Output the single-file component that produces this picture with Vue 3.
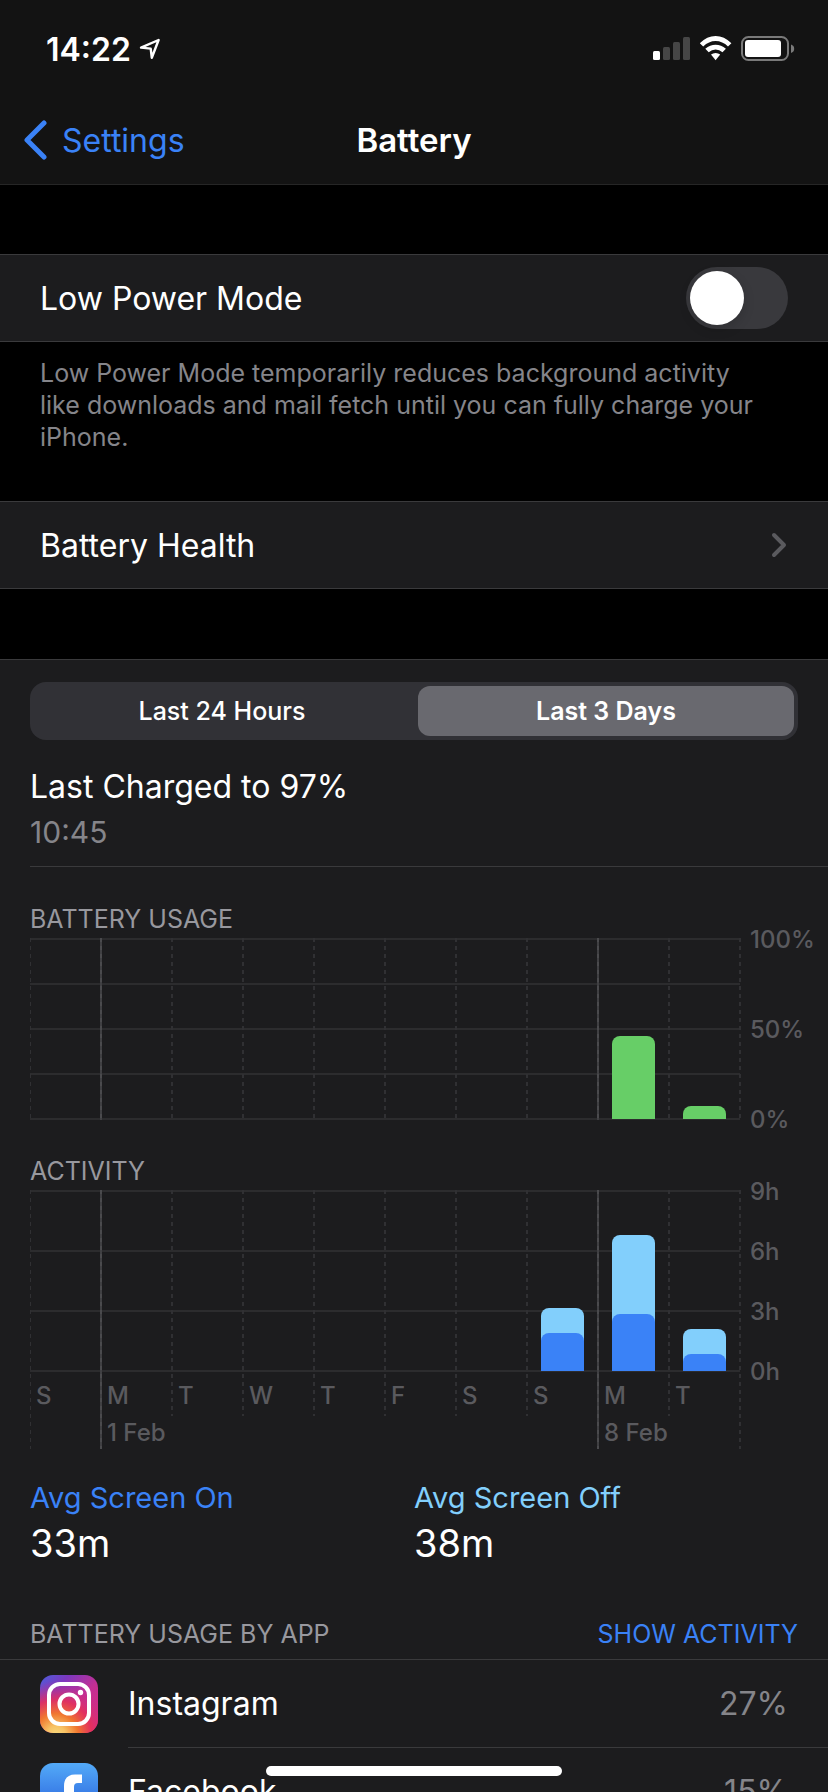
<script setup>
import { ref } from 'vue'

const lowPower = ref(false)
const range = ref('3d')

const days = [
  { day: 'S', usage: 0, on: 0, total: 0 },
  { day: 'M', date: '1 Feb', usage: 0, on: 0, total: 0 },
  { day: 'T', usage: 0, on: 0, total: 0 },
  { day: 'W', usage: 0, on: 0, total: 0 },
  { day: 'T', usage: 0, on: 0, total: 0 },
  { day: 'F', usage: 0, on: 0, total: 0 },
  { day: 'S', usage: 0, on: 0, total: 0 },
  { day: 'S', usage: 0, on: 1.9, total: 3.15 },
  { day: 'M', date: '8 Feb', usage: 46, on: 2.85, total: 6.75 },
  { day: 'T', usage: 7, on: 0.85, total: 2.1 },
]

const maxHours = 9
const share = (value, max) => ({ height: `${(value / max) * 100}%` })
</script>

<template>
  <div class="screen">
    <header class="top">
      <div class="status">
        <span class="time">14:22</span>
        <svg class="locate" width="22" height="22" viewBox="0 0 22 22">
          <path d="M2 9.600 L19.600 2 L12.800 19.800 L11.700 10.600 Z" fill="none" stroke="#fff" stroke-width="2.400" stroke-linejoin="round" />
        </svg>
        <svg class="signals" width="142" height="26" viewBox="0 0 142 26">
          <rect x="0" y="15" width="7" height="9" rx="1.500" fill="#fff" />
          <rect x="10" y="11" width="7" height="13" rx="1.500" fill="#464646" />
          <rect x="20" y="6" width="7" height="18" rx="1.500" fill="#464646" />
          <rect x="30" y="1" width="7" height="23" rx="1.500" fill="#464646" />
          <g fill="#fff">
            <path d="M46.800 7.300 Q54 0 62.600 0 Q71.200 0 78.400 7.300 L75 10.600 Q69.500 5.100 62.600 5.100 Q55.700 5.100 50.200 10.600 Z" />
            <path d="M52.300 12.800 Q57 8.700 62.600 8.700 Q68.200 8.700 72.900 12.800 L69.500 16.200 Q66.400 13.500 62.600 13.500 Q58.800 13.500 55.700 16.200 Z" />
            <path d="M58 18.600 Q60 16.900 62.600 16.900 Q65.200 16.900 67.200 18.600 L62.600 24.200 Z" />
          </g>
          <rect x="89" y="1" width="46" height="23" rx="6.500" fill="none" stroke="#7a7a7a" stroke-width="2" />
          <rect x="92" y="4" width="36" height="17" rx="3" fill="#fff" />
          <path d="M138 8.500 Q141.200 9.500 141.200 12.700 Q141.200 15.900 138 17 Z" fill="#7a7a7a" />
        </svg>
      </div>
      <nav class="nav">
        <a class="back" href="#settings">
          <svg width="24" height="40" viewBox="0 0 24 40">
            <path d="M20 3 L3 20 L20 37" fill="none" stroke="#3a82f7" stroke-width="5" stroke-linecap="round" stroke-linejoin="round" />
          </svg>
          <span>Settings</span>
        </a>
        <h1>Battery</h1>
      </nav>
    </header>

    <main class="content">
      <label class="row" for="low-power">
        <span>Low Power Mode</span>
        <input id="low-power" v-model="lowPower" class="toggle" type="checkbox" role="switch" />
      </label>
      <p class="note">
        Low Power Mode temporarily reduces background activity like downloads and mail fetch until you can fully charge your iPhone.
      </p>

      <a class="row" href="#health">
        <span>Battery Health</span>
        <svg width="18" height="28" viewBox="0 0 18 28">
          <path d="M4 4 L14 14 L4 24" fill="none" stroke="#5a5a5e" stroke-width="4" stroke-linecap="round" stroke-linejoin="round" />
        </svg>
      </a>

      <section class="panel">
        <div class="segments">
          <button type="button" :class="{ active: range === '24h' }" @click="range = '24h'">Last 24 Hours</button>
          <button type="button" :class="{ active: range === '3d' }" @click="range = '3d'">Last 3 Days</button>
        </div>

        <div class="charged">
          <h2>Last Charged to 97%</h2>
          <p>10:45</p>
        </div>

        <h3 class="caption usage-title">BATTERY USAGE</h3>
        <div class="chart">
          <div class="plot quarters">
            <div v-for="(d, i) in days" :key="i" class="column" :class="{ week: d.date }">
              <div class="slot">
                <div v-if="d.usage" class="bar usage" :style="share(d.usage, 100)"></div>
              </div>
            </div>
          </div>
          <div class="axis"><span>100%</span><span>50%</span><span>0%</span></div>
        </div>

        <h3 class="caption activity-title">ACTIVITY</h3>
        <div class="chart">
          <div class="plot thirds">
            <div v-for="(d, i) in days" :key="i" class="column" :class="{ week: d.date }">
              <div class="slot">
                <div v-if="d.total" class="bar off" :style="share(d.total, maxHours)">
                  <div class="bar on" :style="share(d.on, d.total)"></div>
                </div>
              </div>
              <span class="day">{{ d.day }}</span>
              <span v-if="d.date" class="date">{{ d.date }}</span>
            </div>
          </div>
          <div class="axis"><span>9h</span><span>6h</span><span>3h</span><span>0h</span></div>
        </div>

        <dl class="averages">
          <div>
            <dt class="blue">Avg Screen On</dt>
            <dd>33m</dd>
          </div>
          <div>
            <dt class="sky">Avg Screen Off</dt>
            <dd>38m</dd>
          </div>
        </dl>

        <div class="list-head">
          <h3>BATTERY USAGE BY APP</h3>
          <button type="button">SHOW ACTIVITY</button>
        </div>

        <ul class="apps">
          <li>
            <svg class="icon" width="58" height="58" viewBox="0 0 58 58">
              <defs>
                <linearGradient id="ig-base" x1="0" y1="0" x2="1" y2="1">
                  <stop offset="0" stop-color="#4a5fdc" />
                  <stop offset="0.250" stop-color="#7c38bf" />
                  <stop offset="0.550" stop-color="#c32f94" />
                  <stop offset="1" stop-color="#e02a77" />
                </linearGradient>
                <radialGradient id="ig-glow" cx="0.280" cy="1.050" r="0.950">
                  <stop offset="0" stop-color="#f8dc80" />
                  <stop offset="0.180" stop-color="#f7c264" />
                  <stop offset="0.400" stop-color="#f0772f" />
                  <stop offset="0.650" stop-color="#e5315a" stop-opacity="0.900" />
                  <stop offset="1" stop-color="#c32f94" stop-opacity="0" />
                </radialGradient>
              </defs>
              <rect width="58" height="58" rx="13" fill="url(#ig-base)" />
              <rect width="58" height="58" rx="13" fill="url(#ig-glow)" />
              <rect x="9" y="9" width="40" height="40" rx="11" fill="none" stroke="#fff" stroke-width="4" />
              <circle cx="29" cy="29" r="9.500" fill="none" stroke="#fff" stroke-width="4" />
              <circle cx="40.500" cy="17.500" r="2.700" fill="#fff" />
            </svg>
            <div class="app">
              <span>Instagram</span>
              <span class="percent">27%</span>
            </div>
          </li>
          <li>
            <svg class="icon" width="58" height="58" viewBox="0 0 58 58">
              <defs>
                <linearGradient id="fb-base" x1="0" y1="0" x2="0" y2="1">
                  <stop offset="0" stop-color="#53aaf8" />
                  <stop offset="0.500" stop-color="#3b80e8" />
                  <stop offset="1" stop-color="#2b62d0" />
                </linearGradient>
              </defs>
              <rect width="58" height="58" rx="13" fill="url(#fb-base)" />
              <path d="M24 58 V38 H17 V29 H24 V23 C24 15.500 28 11.500 35 11.500 H42 V20 H38 C35 20 34 21.500 34 24 V29 H42 L40.500 38 H34 V58 Z" fill="#fff" />
            </svg>
            <div class="app">
              <span>Facebook</span>
              <span class="percent">15%</span>
            </div>
          </li>
        </ul>
      </section>
    </main>
    <div class="home"></div>
  </div>
</template>

<style>
body {
  background: #000;
}
</style>

<style scoped>
.screen {
  position: relative;
  display: flex;
  flex-direction: column;
  height: 100vh;
  overflow: hidden;
  background: #000;
  color: #fff;
  font-family: Inter, "Liberation Sans", sans-serif;
  font-size: 32px;
}
h1, h2, h3, p, dl, dd, ul {
  margin: 0;
  padding: 0;
  font-weight: 400;
}
a {
  color: inherit;
  text-decoration: none;
}
button {
  border: 0;
  padding: 0;
  background: none;
  color: inherit;
  font: inherit;
}
svg {
  display: block;
  flex: none;
}

.top {
  flex: none;
  background: #131313;
  border-bottom: 1px solid #262626;
}
.status {
  display: flex;
  align-items: center;
  height: 98px;
  padding: 0 33px 0 46px;
}
.time {
  font-size: 32px;
  font-weight: 600;
}
.locate {
  margin-left: 8px;
}
.signals {
  margin-left: auto;
}
.nav {
  display: grid;
  grid-template-columns: 1fr auto 1fr;
  align-items: center;
  height: 84px;
  padding: 0 24px 2px;
}
.nav h1 {
  font-size: 33px;
  font-weight: 600;
}
.back {
  display: flex;
  align-items: center;
  gap: 14px;
  color: #3a82f7;
}

.content {
  flex: 1;
  min-height: 0;
  overflow-y: auto;
  scrollbar-width: none;
  padding-top: 69px;
}
.row {
  display: flex;
  align-items: center;
  justify-content: space-between;
  box-sizing: border-box;
  height: 88px;
  padding: 0 40px;
  background: #1c1c1e;
  border: solid #3a3a3c;
  border-width: 1px 0;
}
.toggle {
  appearance: none;
  width: 102px;
  height: 62px;
  margin: 0;
  padding: 4px;
  box-sizing: border-box;
  border-radius: 31px;
  background: #39393d;
}
.toggle::before {
  content: "";
  display: block;
  width: 54px;
  height: 54px;
  border-radius: 50%;
  background: #fff;
  box-shadow: 0 4px 12px rgba(0, 0, 0, 0.15);
}
.toggle:checked {
  background: #67ce67;
}
.toggle:checked::before {
  margin-left: 40px;
}
.note {
  padding: 15px 58px 48px 40px;
  color: #85858a;
  font-size: 25px;
  line-height: 32px;
}

.panel {
  margin-top: 70px;
  padding-top: 22px;
  background: #1c1c1e;
  border-top: 1px solid #3a3a3c;
}
.segments {
  display: grid;
  grid-template-columns: 1fr 1fr;
  gap: 8px;
  box-sizing: border-box;
  height: 58px;
  margin: 0 30px;
  padding: 4px;
  border-radius: 16px;
  background: #313136;
  font-size: 25px;
  font-weight: 500;
}
.segments button {
  border-radius: 12px;
}
.segments .active {
  background: #69696f;
  font-weight: 600;
}
.charged {
  margin-left: 30px;
  padding: 24px 0 12px;
  border-bottom: 1px solid #3a3a3c;
}
.charged h2 {
  font-size: 32px;
  line-height: 46px;
}
.charged p {
  color: #85858a;
  font-size: 30px;
  line-height: 44px;
}
.caption {
  margin-left: 30px;
  color: #98989e;
  font-size: 25px;
  line-height: 38px;
}
.usage-title {
  margin-top: 33px;
}
.activity-title {
  margin-top: 32px;
}

.chart {
  display: flex;
  align-items: flex-start;
  padding-left: 30px;
  color: #5a5a5e;
  font-size: 24px;
  font-weight: 500;
}
.plot {
  flex: 1;
  display: grid;
  grid-template-columns: repeat(10, 1fr);
  align-items: start;
  background-size: 100% 182px;
  background-repeat: no-repeat;
}
.quarters {
  background-image: repeating-linear-gradient(#2c2c2e 0 2px, transparent 2px 45px);
}
.thirds {
  background-image: repeating-linear-gradient(#2c2c2e 0 2px, transparent 2px 60px);
}
.column {
  position: relative;
}
.column::before,
.column:last-child::after {
  content: "";
  position: absolute;
  top: 0;
  bottom: 0;
  left: -1px;
  width: 2px;
  background: repeating-linear-gradient(#303033 0 4px, transparent 4px 8px);
}
.column:first-child::before {
  left: 0;
  width: 1px;
}
.column:last-child::after {
  right: -1px;
  left: auto;
}
.column.week::before {
  background: repeating-linear-gradient(#4a4a4d 0 4px, #404043 4px 8px);
}
.thirds .column:first-child::before,
.thirds .column:last-child::after {
  bottom: -33px;
}
.slot {
  display: flex;
  align-items: flex-end;
  justify-content: center;
  height: 181px;
  margin-bottom: 1px;
}
.bar {
  border-radius: 8px 8px 0 0;
}
.slot > .bar {
  width: 60%;
}
.usage {
  background: #67ce67;
}
.off {
  display: flex;
  align-items: flex-end;
  background: #82cffc;
}
.on {
  width: 100%;
  background: #3a82f7;
}
.day,
.date {
  display: block;
  padding-left: 6px;
  white-space: nowrap;
}
.day {
  padding-top: 4px;
  line-height: 40px;
}
.date {
  line-height: 33px;
}
.axis {
  display: flex;
  flex-direction: column;
  justify-content: space-between;
  width: 78px;
  height: 210px;
  margin: -13px 0 -15px;
  padding-left: 10px;
  line-height: 30px;
}

.averages {
  display: grid;
  grid-template-columns: 1fr 1fr;
  margin: 29px 30px 40px;
}
.averages dt {
  font-size: 29px;
  line-height: 40px;
}
.averages dd {
  font-size: 38px;
  line-height: 50px;
}
.blue {
  color: #3a82f7;
}
.sky {
  color: #82cffc;
}
.list-head {
  display: flex;
  justify-content: space-between;
  height: 51px;
  padding: 0 30px;
  border-bottom: 1px solid #3a3a3c;
  color: #98989e;
  font-size: 25px;
  line-height: 52px;
}
.list-head h3 {
  font-size: 25px;
}
.list-head button {
  color: #3a82f7;
}
.apps {
  list-style: none;
}
.apps li {
  display: flex;
  align-items: center;
  gap: 30px;
  height: 88px;
  padding-left: 40px;
}
.app {
  flex: 1;
  display: flex;
  align-items: center;
  justify-content: space-between;
  box-sizing: border-box;
  height: 88px;
  padding-right: 40px;
  border-bottom: 1px solid #3a3a3c;
}
.percent {
  color: #85858a;
}
.home {
  position: absolute;
  bottom: 16px;
  left: 50%;
  width: 296px;
  height: 10px;
  margin-left: -148px;
  border-radius: 5px;
  background: #fff;
}
</style>
